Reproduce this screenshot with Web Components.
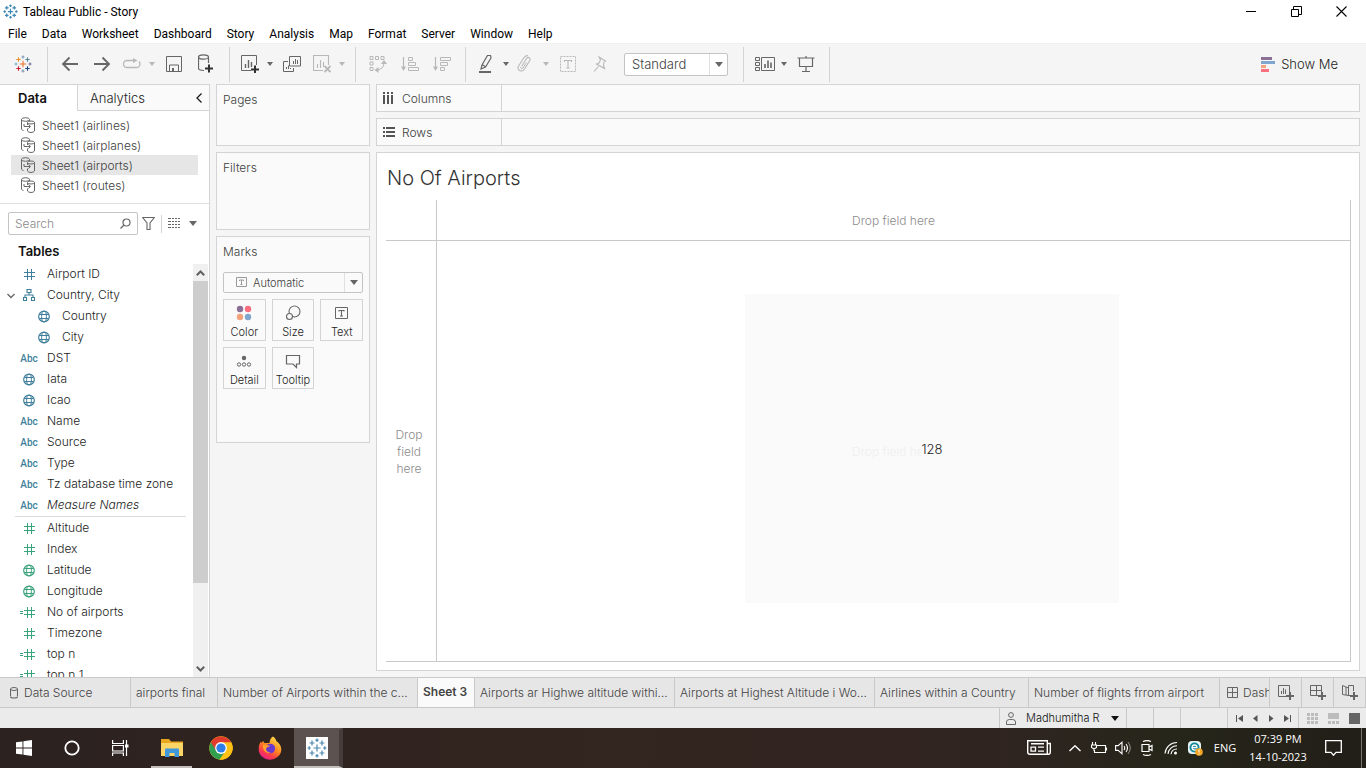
<!DOCTYPE html>
<html lang="en">
<head>
<meta charset="utf-8">
<title>Tableau Public - Story</title>
<style>
  :root {
    --ui: "Inter", "Open Sans", sans-serif;
    --system: "Roboto", "Noto Sans", sans-serif;
    --desktop: "Open Sans", "Noto Sans", sans-serif;
    --line: #d4d4d4;
    --panel: #fafafa;
    --shell: #f5f5f5;
    --ink: #1c1c1c;
    --muted: #404040;
    --dimension: #3f7f9b;
    --measure: #3aa37c;
  }
  body { margin: 0; background: #f5f5f5; color: #1c1c1c; font-family: var(--ui); font-size: 12px; font-weight: 300; }
</style>
</head>
<body>
<story-app></story-app>

<script>
const define = (name, html, setup) => {
  const template = document.createElement('template');
  template.innerHTML = `<style>*{box-sizing:border-box}button,input,select{font:inherit;color:inherit}button{border:0;background:none;padding:0;margin:0}</style>${html}`;
  customElements.define(name, class extends HTMLElement {
    constructor() {
      super();
      this.attachShadow({ mode: 'open' }).append(template.content.cloneNode(true));
    }
    connectedCallback() { if (setup) setup(this, this.shadowRoot); }
  });
};
const iconElement = name => {
  const icon = document.createElement('ui-icon');
  icon.setAttribute('name', name);
  return icon;
};

/* ---------- icon set: [width, height, markup] ---------- */
const plus = (x, y, r, c) => `<path d="M${x - r} ${y}h${2 * r}M${x} ${y - r}v${2 * r}" stroke="${c}" fill="none"/>`;
const sparkle = (w, c, s) => [w, w, `<g transform="scale(${w / 18})" stroke-width="${s}">` +
  plus(9, 9, 3.2, c[0]) + plus(9, 2, 1.5, c[1]) + plus(9, 16, 1.5, c[2]) + plus(2, 9, 1.5, c[3]) + plus(16, 9, 1.5, c[4]) +
  plus(4.5, 4.5, 2.2, c[5]) + plus(13.5, 4.5, 2.2, c[6]) + plus(4.5, 13.5, 2.2, c[7]) + plus(13.5, 13.5, 2.2, c[8]) + '</g>'];
const mono = c => Array(9).fill(c);
const line = (d, w = 1) => `<path d="${d}" fill="none" stroke="currentColor" stroke-width="${w}"/>`;
const fill = d => `<path d="${d}" fill="currentColor"/>`;
const hash = line('M4.500 0v11M8.500 0v11M1 3.500h11M1 7.500h11');

const ICONS = {
  logo: sparkle(18, ['#e8762c', '#7a9ab5', '#7a8fb0', '#7ab0c4', '#6d6a9a', '#eb912c', '#5b879b', '#c72035', '#1f447e'], 1.1),
  logoBlue: sparkle(15, mono('#3f8ab5'), 1.5),
  logoTask: sparkle(20, mono('#4c88ae'), 1.1),
  minimize: [11, 11, line('M0 5.5h10')],
  restore: [11, 11, line('M.5 3.5h7v7h-7zM2.5 3V.5h8v8H8')],
  close: [11, 11, line('M.5.5l10 10M10.5.5l-10 10', 1.1)],
  caret: [6, 4, fill('M0 0h6L3 4z')],
  caretWide: [8, 5, fill('M0 0h8L4 5z')],
  back: [18, 16, line('M17 8H2M8.500 1.500L2 8l6.500 6.500', 1.8)],
  forward: [18, 16, line('M1 8h15M9.500 1.500L16 8l-6.500 6.500', 1.8)],
  redo: [18, 12, line('M12 2.500H4A3.500 3.500 0 0 0 .5 6v0A3.500 3.500 0 0 0 4 9.500h9.500A3.500 3.500 0 0 0 17 6q0-1.500-1-2.500', 1.3) + fill('M10 0l4.500 2.500L10 5z')],
  save: [16, 16, line('M.5.5h15v15H.5zM3.500 15v-6h9v6M6.500 15v-3') + fill('M6 12h2v3H6z')],
  addData: [16, 20, line('M6 16.500C3 16.500.500 16 .5 14.500V3.500M10.500 3.500V9', 1.2) + `<ellipse cx="5.500" cy="3" rx="5" ry="2.200" fill="none" stroke="currentColor" stroke-width="1.200"/>` + `<path d="M7 14.500h8M11 10.500v8" stroke="#333" stroke-width="2"/>`],
  newSheet: [18, 18, line('M10 15.500H.500V.500h15V10') + line('M4.500 13V9M7.500 13V5M10.500 12V7', 1.4) + `<path d="M10 14.500h8M14 10.500v8" stroke="#333" stroke-width="2"/>`],
  duplicate: [18, 16, line('M6.500.500h11v9.500h-11zM5 5.500H.500v10h10V12M10.500 8V5M12.500 8V3M14.500 8V4M3.500 13v-2M5.500 13V9.500M7.500 13v-1')],
  clear: [18, 18, line('M10 15.500H.500V.500h15V10M4.500 13V9M7.500 13V5M10.500 12V7', 1.1) + line('M11.500 11l6 6M17.500 11l-6 6', 1.8)],
  swap: [18, 18, line('M1 1.500h3v3H1zM6.500 1.500h3v3h-3zM12 1.500h3v3h-3zM1 7h3v3H1zM1 12.500h3v3H1zM8 15q6.500-.5 7-7') + fill('M5.500 15l4-3v6zM15 5l3 4h-6z')],
  sortAsc: [18, 16, line('M2.500 1v12', 1.2) + fill('M0 10.500h5L2.500 15z') + line('M7.500 1.500h4v3h-4zM7.500 6.500h7v3h-7zM7.500 11.500h10v3h-10z')],
  sortDesc: [18, 16, line('M2.500 1v12', 1.2) + fill('M0 10.500h5L2.500 15z') + line('M7.500 1.500h10v3h-10zM7.500 6.500h7v3h-7zM7.500 11.500h4v3h-4z')],
  highlight: [18, 18, line('M4 14l1-4 5.500-9.500h3L14 3 8.500 12 4 14zM5 9.500l4 2.500', 1.2) + fill('M2 16h12v2H2z')],
  clip: [16, 18, line('M5 11l4.500-7.500q1.500-1.800 2.800-.8t.5 2.800L7.500 14q-2 3-4.800 1.500T1.600 11L7 2.500Q9 .2 11 .7', 1.1) + line('M9.500 7.500L6 13q-1 1-1.800.4t-.2-1.800', 1)],
  textBox: [18, 16, `<path d="M1.500.500h15v15h-15z" fill="none" stroke="currentColor" stroke-dasharray="2 1"/>` + line('M5.500 6V4.500h7V6M9 4.500v7.500M7.500 12h3', 1.1)],
  pin: [14, 16, line('M6 1l6.500 4-1.500 1-.5 3.500 1 3-8-4.500 2.500-1L7.500 4zM5.500 10.500L1 15.500', 1.1)],
  cards: [20, 16, line('M.5 1.500h4v3h-4zM.5 6.500h4v3h-4zM.5 11.500h4v3h-4zM6.500 1.500h13v13h-13z') + line('M10 12V8M13 12V4.500M16 12V6.500', 1.6)],
  present: [18, 16, line('M.5 2h17M2.500 2v8.500h13V2M9 10.500V15M5 15.500h8M9 0v2', 1.2)],
  showMe: [14, 15, '<path d="M0 0h11v3H0z" fill="#8a6f96"/><path d="M0 4h14v3H0z" fill="#7fa6cd"/><path d="M0 8h5v3H0z" fill="#f2a27c"/><path d="M0 12h8v3H0z" fill="#fa6e7e"/>'],
  collapse: [6, 10, line('M5.500.500L1 5l4.500 4.500', 1.3)],
  expand: [8, 6, line('M.5 1L4 4.500 7.500 1', 1.3)],
  source: [14, 16, line('M2.500 13.500C1 13 .5 12.500.5 12V2.500M8.500 2.500V4') + `<ellipse cx="4.500" cy="2.500" rx="4" ry="1.800" fill="none" stroke="currentColor"/><ellipse cx="10" cy="5.500" rx="3.500" ry="1.500" fill="none" stroke="currentColor"/>` + line('M6.500 6v2M6.500 11.500V14q1 1.500 3.500 1.500t3.500-1.500V5.500M3 7v2.500h6M7.500 7.500l2 2-2 2')],
  search: [11, 11, `<circle cx="6.500" cy="4.500" r="3.500" fill="none" stroke="currentColor" stroke-width="1.200"/>` + line('M4 7L.5 10.500', 1.3)],
  filter: [13, 13, line('M.7.500h11.600L8 6v6.500H5V6z', 1.1)],
  list: [12, 11, `<path d="M0 .5h12M0 3.500h12M0 6.500h12M0 9.500h12" stroke="currentColor" stroke-dasharray="3 1 2 1 2 1 2" fill="none"/>`],
  number: [12, 11, hash],
  calc: [20, 11, `<g transform="translate(4)">${hash}</g>` + line('M1 4.500h3M1 6.500h3')],
  geo: [12, 13, `<g transform="translate(0 .5)"><circle cx="6" cy="6" r="5.300" fill="none" stroke="currentColor" stroke-width="1.200"/><ellipse cx="6" cy="6" rx="2.400" ry="5.300" fill="none" stroke="currentColor"/>` + line('M1.300 4h9.400M1.300 8h9.400') + '</g>'],
  hierarchy: [12, 13, line('M4 .5h4v3H4zM.5 8.500h3v3h-3zM8.500 8.500h3v3h-3zM6 3.500V6M2 8.500V6h8v2.500', 1.1)],
  up: [9, 6, line('M.8 5.200L4.500 1.500 8.200 5.200', 2)],
  down: [9, 6, line('M.8.800L4.500 4.500 8.200.800', 2)],
  columns: [11, 12, fill('M0 0h2v2H0zM0 3h2v9H0zM4 0h2v2H4zM4 3h2v9H4zM8 0h2v2H8zM8 3h2v9H8z')],
  rows: [12, 10, fill('M0 0h2v2H0zM3 0h9v2H3zM0 4h2v2H0zM3 4h9v2H3zM0 8h2v2H0zM3 8h9v2H3z')],
  markText: [11, 11, line('M.5.500h10v9H.5z') + line('M3.500 4V3h4v1M5.500 3v5M4.500 7.500h2')],
  color: [16, 16, '<circle cx="4" cy="4" r="3.200" fill="#8a6f96"/><circle cx="12" cy="4" r="3.200" fill="#fa6e7e"/><circle cx="4" cy="12" r="3.200" fill="#f2a27c"/><circle cx="12" cy="12" r="3.200" fill="#7fa6cd"/>'],
  size: [16, 16, `<circle cx="9.500" cy="6.500" r="5.500" fill="none" stroke="currentColor" stroke-width="1.100"/><circle cx="4.500" cy="11.500" r="3" fill="#fafafa" stroke="currentColor" stroke-width="1.100"/>`],
  text: [16, 16, line('M1.500 2.500h12v11h-12z') + line('M5 6.500V5.500h5v1M7.500 5.500v5.500M6 11h3', 1.1)],
  detail: [16, 16, '<circle cx="8" cy="5" r="2.200" fill="currentColor"/><g fill="none" stroke="currentColor"><circle cx="3" cy="11.500" r="1.700"/><circle cx="8" cy="11.500" r="1.700"/><circle cx="13" cy="11.500" r="1.700"/></g>'],
  tooltip: [16, 16, line('M1.500 2.500h13v8.500h-3v3.500L8 11H1.500z', 1.2)],
  database: [8, 12, line('M.5 2v7M7.500 2v7M.5 9.500q0 1.500 3.500 1.500T7.500 9.500', 1.1) + '<ellipse cx="4" cy="2" rx="3.500" ry="1.500" fill="none" stroke="currentColor"/>'],
  dashboard: [11, 11, line('M.5.500h10v10H.5zM5.500.500v10M.5 5.500h10')],
  addSheet: [16, 16, line('M8 11.500H.500V.500h11V7M3.500 9V6M5.500 9V3M7.500 9V4.500') + line('M8 11h8M12 7v8', 2)],
  addDash: [16, 16, line('M8 10.500H.500V.500h11V7M6.500.500v10M.5 5.500h11') + line('M8 11h8M12 7v8', 2)],
  addStory: [16, 16, line('M8 10.500H6.500L.5 9.500V.5L4 2l2.500 1V.500H9M6.500 2v9M11.500.500V6M4 2V10M9 .500h2.500') + line('M8 11h8M12 7v8', 2)],
  user: [10, 13, '<circle cx="5" cy="3" r="2.400" fill="none" stroke="currentColor"/>' + line('M.5 12.500V10Q.5 7.500 3.500 7.500h3q3 0 3 2.500v2.500z')],
  first: [7, 7, fill('M0 0h1v7H0zM2 3.500L7 0v7z')],
  prev: [5, 7, fill('M0 3.500L4.500 0v7z')],
  next: [5, 7, fill('M4.500 3.500L0 0v7z')],
  last: [7, 7, fill('M6 0h1v7H6zM5 3.500L0 0v7z')],
  gridView: [11, 11, fill('M0 0h3v3H0zM4 0h3v3H4zM8 0h3v3H8zM0 4h3v3H0zM4 4h3v3H4zM8 4h3v3H8zM0 8h3v3H0zM4 8h3v3H4zM8 8h3v3H8z')],
  filmView: [11, 11, fill('M0 0h11v6H0zM0 8h3v3H0zM4 8h3v3H4zM8 8h3v3H8z')],
  fullView: [11, 11, fill('M0 0h11v11H0z')],
  windows: [16, 16, fill('M0 2.300L6.500 1.400V7.600H0zM7.400 1.300L16 0v7.600H7.400zM0 8.400h6.500v6.200L0 13.700zM7.400 8.400H16V16L7.400 14.700z')],
  cortana: [16, 16, '<circle cx="8" cy="8" r="6.700" fill="none" stroke="currentColor" stroke-width="1.800"/>'],
  taskView: [17, 16, line('M.6 0v3.500h10.800V0M.6 5.500h10.800v5.500H.6zM.6 16v-3h10.800v3M14.500 0v16', 1.2) + fill('M13 4.500h3.500v3H13z')],
  explorer: [22, 18, '<path d="M0 0h8l2 2.500h12V17H0z" fill="#e9a820"/><path d="M0 4h22v13H0z" fill="#fbd667"/><path d="M4 10.500q0-1 1-1h12q1 0 1 1V18h-4.500v-4h-5v4H4z" fill="#3f97dc"/>'],
  chrome: [24, 24, '<circle cx="12" cy="12" r="11.700" fill="#fbc116"/><path d="M12 12L1.900 6.200A11.700 11.700 0 0 0 10.600 23.600L17 14.900z" fill="#30a050"/><path d="M12 6.500H22.300A11.700 11.700 0 0 0 1.900 6.200L7.300 15z" fill="#e23b2e"/><path d="M7.200 14.800L12 12l4.800 2.800-3.800 5.200z" fill="#30a050"/><path d="M16.800 14.800L10.600 23.600A11.700 11.700 0 0 0 22.300 6.500H12z" fill="#fbc116"/><circle cx="12" cy="12" r="5.900" fill="#fff"/><circle cx="12" cy="12" r="4.600" fill="#2f7de9"/>'],
  firefox: [24, 24, '<defs><linearGradient id="f" x1=".8" y1="0" x2=".2" y2="1"><stop offset="0" stop-color="#ffe24a"/><stop offset=".45" stop-color="#ff8a1f"/><stop offset=".75" stop-color="#fb3a4b"/><stop offset="1" stop-color="#e3199c"/></linearGradient></defs><path d="M15 .500c2 1.300 3 3 3.300 4.500 3 2 5 5 5 8.500A11.300 10.400 0 0 1 .7 13c0-3 .7-5.500 2.300-7.500L3.400 7l1.800-2 1.300 2h5c0-3 1.500-5.300 3.500-6.500z" fill="url(#f)"/><circle cx="12.300" cy="12.500" r="4.800" fill="#6a3ad0"/><path d="M5 9c3-1 4 .8 7 .6-.5 1.600-3.500 1.400-4 3.400 0 2 2 3.500 5 3.500-4 1.500-8.500-1-8-7.500z" fill="#ffa22b"/>'],
  news: [24, 16, line('M.7.700h19.600v13.600H3Q.7 14.300.7 12zM20.300 3.500h3V12q0 2.300-2 2.300h-3M4 3.700h13', 1.4) + line('M4 7.200h4.500v4H4zM11 7.200h6M11 11.200h6', 1.3)],
  chevron: [12, 7, line('M.5 6L6 .8 11.500 6', 1.4)],
  battery: [17, 12, line('M6 3.500h8.500v7H3.500V8M15.500 5.500v3M1.500 0v3M4.500 0v3M.5 3h5v2.500L3 7 .5 5.500zM3 7v2', 1.1)],
  speaker: [16, 14, line('M.6 4.600h2.600L7 1.200v11.600L3.200 9.400H.6zM9 5q1.500 2 0 4M11 3q3 4 0 8', 1.1) + `<path d="M13 1q4.500 6 0 12" fill="none" stroke="currentColor" opacity=".5"/>`],
  camera: [12, 16, line('M1 4.500h7v7H1zM8 7l3-1.500v5L8 9M2 1.500Q6-.300 10 1.500M2 14.500q4 1.800 8 0', 1.2)],
  wifi: [14, 14, line('M1 12.500A12 12 0 0 1 13 1.500M4 13A9 9 0 0 1 13 4.800M7 13.300A6 6 0 0 1 13 8', 1.1) + '<circle cx="11.500" cy="12" r="1.500" fill="currentColor"/>'],
  shield: [15, 15, '<rect width="13" height="13" rx="4" fill="#e8f5f6"/><circle cx="6.500" cy="6.500" r="5" fill="#138a99"/><path d="M4 6.700h5Q8.700 4 6.500 4T4 6.500q.3 2.700 2.700 2.700 1.200 0 2-.7" fill="none" stroke="#fff" stroke-width="1.300"/><circle cx="11" cy="11" r="3.800" fill="#f5a623"/><path d="M11 8.500v3M11 12.500v1" stroke="#fff"/>'],
  notify: [17, 16, line('M.7.700h15.600v11.600H11l-2.500 2.900L6 12.300H.7z', 1.3)],
};

customElements.define('ui-icon', class extends HTMLElement {
  connectedCallback() {
    if (this.shadowRoot) return;
    const [w, h, body] = ICONS[this.getAttribute('name')];
    this.attachShadow({ mode: 'open' }).innerHTML =
      `<style>:host{display:inline-flex;flex:none}svg{display:block}</style>
       <svg width="${w}" height="${h}" viewBox="0 0 ${w} ${h}" aria-hidden="true">${body}</svg>`;
  }
});

/* ---------- window chrome ---------- */
define('title-bar', `
  <style>
    :host { display: flex; align-items: center; height: 23px; background: #fff; color: #000; font: 12px/22px var(--system); padding: 0 2px 0 3px; }
    span { margin-left: 5px; flex: 1; }
    button { width: 45px; height: 20px; display: flex; align-items: center; justify-content: center; }
  </style>
  <ui-icon name="logoBlue"></ui-icon><span>Tableau Public - Story</span>
  <button aria-label="Minimize"><ui-icon name="minimize"></ui-icon></button>
  <button aria-label="Restore"><ui-icon name="restore"></ui-icon></button>
  <button aria-label="Close"><ui-icon name="close"></ui-icon></button>`);

define('menu-bar', `
  <style>
    :host { display: flex; height: 20px; background: #fff; color: #000; font: 12px/22px var(--system); padding-left: 8px; gap: 15px; }
    button { line-height: 22px; }
  </style>`, (host, root) => {
  for (const label of ['File', 'Data', 'Worksheet', 'Dashboard', 'Story', 'Analysis', 'Map', 'Format', 'Server', 'Window', 'Help']) {
    const b = document.createElement('button');
    b.textContent = label;
    root.append(b);
  }
});

/* ---------- toolbar ---------- */
define('tool-group', `
  <style>
    :host { display: flex; align-items: center; height: 35px; padding: 0 7px 0 6px; border-right: 1px solid var(--line); }
  </style><slot></slot>`);

define('tool-button', `
  <style>
    :host { display: block; color: #666; }
    :host([off]) { color: #b8b8b8; }
    button { width: 32px; height: 28px; display: flex; align-items: center; justify-content: center; color: inherit; }
    :host([menu]) button { width: 40px; justify-content: space-between; padding: 0 3px 0 5px; }
    .caret { display: none; }
    :host([menu]) .caret { display: inline-flex; }
  </style>
  <button><ui-icon class="caret" name="caret"></ui-icon></button>`,
  (host, root) => {
    const button = root.querySelector('button');
    button.prepend(iconElement(host.getAttribute('icon')));
    button.setAttribute('aria-label', host.getAttribute('label'));
    button.setAttribute('aria-disabled', host.hasAttribute('off'));
  });

define('drop-down', `
  <style>
    :host { display: flex; position: relative; background: #fff; border: 1px solid #c4c4c4; border-radius: 2px; color: var(--muted); }
    select { appearance: none; border: 0; background: none; flex: 1; min-width: 0; padding: 0 0 0 var(--indent, 7px); margin: 0; outline: 0; }
    .lead { position: absolute; left: 12px; top: 0; bottom: 0; display: flex; align-items: center; color: #999; }
    .arrow { width: 18px; border-left: 1px solid #e0e0e0; display: flex; align-items: center; justify-content: center; pointer-events: none; color: #666; }
  </style>
  <div class="lead"><slot name="lead"></slot></div>
  <select><option></option></select>
  <div class="arrow"><ui-icon name="caretWide"></ui-icon></div>`, (host, root) => {
  root.querySelector('option').textContent = host.getAttribute('value');
  root.querySelector('select').setAttribute('aria-label', host.getAttribute('label'));
});

define('tool-bar', `
  <style>
    :host { display: flex; align-items: center; height: 41px; background: var(--shell); border-top: 1px solid #f0f0f0; }
    .home { padding: 0 8px 0 7px; }
    drop-down { width: 104px; height: 23px; margin: 0 8px; font-size: 13px; }
    .show { margin-left: auto; margin-right: 28px; display: flex; align-items: center; gap: 6px; font-size: 13px; color: var(--ink); }
  </style>
  <tool-group class="home"><tool-button icon="logo" label="Start page"></tool-button></tool-group>
  <tool-group>
    <tool-button icon="back" label="Undo"></tool-button>
    <tool-button icon="forward" label="Redo"></tool-button>
    <tool-button icon="redo" label="Replay" menu off></tool-button>
    <tool-button icon="save" label="Save"></tool-button>
    <tool-button icon="addData" label="New data source"></tool-button>
  </tool-group>
  <tool-group>
    <tool-button icon="newSheet" label="New worksheet" menu></tool-button>
    <tool-button icon="duplicate" label="Duplicate"></tool-button>
    <tool-button icon="clear" label="Clear sheet" menu off></tool-button>
  </tool-group>
  <tool-group>
    <tool-button icon="swap" label="Swap rows and columns" off></tool-button>
    <tool-button icon="sortAsc" label="Sort ascending" off></tool-button>
    <tool-button icon="sortDesc" label="Sort descending" off></tool-button>
  </tool-group>
  <tool-group>
    <tool-button icon="highlight" label="Highlight" menu></tool-button>
    <tool-button icon="clip" label="Group members" menu off></tool-button>
    <tool-button icon="textBox" label="Show mark labels" off></tool-button>
    <tool-button icon="pin" label="Fix axes" off></tool-button>
    <drop-down value="Standard" label="Fit"></drop-down>
  </tool-group>
  <tool-group>
    <tool-button icon="cards" label="Show or hide cards" menu></tool-button>
    <tool-button icon="present" label="Presentation mode"></tool-button>
  </tool-group>
  <button class="show"><ui-icon name="showMe"></ui-icon>Show Me</button>`);

/* ---------- data pane ---------- */
define('source-item', `
  <style>
    :host { display: flex; align-items: center; height: 20px; margin: 0 11px; padding-left: 10px; gap: 7px; color: var(--muted); }
    :host([selected]) { background: #e6e6e6; }
    ui-icon { color: #666; }
  </style>
  <ui-icon name="source"></ui-icon><span><slot></slot></span>`);

define('field-item', `
  <style>
    :host { display: grid; grid-template-columns: 18px 22px 1fr; align-items: center; height: 21px; flex: none; color: var(--ink); white-space: nowrap; }
    :host([child]) { padding-left: 15px; }
    .kind { display: flex; justify-content: center; color: var(--dimension); }
    :host([measure]) .kind { color: var(--measure); }
    .abc { font: 500 10px/14px var(--system); }
    .label { padding-left: 7px; line-height: 19px; padding-bottom: 2px; }
    :host([italic]) .label { font-style: italic; }
    .toggle { display: flex; justify-content: flex-end; padding-right: 3px; }
    button { color: #666; display: flex; }
  </style>
  <span class="toggle"></span><span class="kind"></span><span class="label"><slot></slot></span>`, (host, root) => {
  const kind = host.getAttribute('kind');
  const cell = root.querySelector('.kind');
  if (kind === 'abc') cell.innerHTML = '<span class="abc">Abc</span>';
  else cell.replaceChildren(iconElement(kind));
  if (host.hasAttribute('open')) root.querySelector('.toggle').innerHTML = '<button aria-label="Collapse"><ui-icon name="expand"></ui-icon></button>';
});

define('scroll-strip', `
  <style>
    :host { display: flex; flex-direction: column; width: 15px; background: #f0f0f0; color: #606060; }
    button { height: 17px; display: flex; align-items: center; justify-content: center; }
    .track { flex: 1; }
    .thumb { height: 80%; max-height: 302px; background: #cdcdcd; }
  </style>
  <button aria-label="Scroll up"><ui-icon name="up"></ui-icon></button>
  <div class="track"><div class="thumb"></div></div>
  <button aria-label="Scroll down"><ui-icon name="down"></ui-icon></button>`);

define('data-pane', `
  <style>
    :host { display: flex; flex-direction: column; min-height: 0; background: #fff; border-right: 1px solid var(--line); border-top: 1px solid var(--line); }
    .tabs { display: flex; height: 26px; font-size: 13px; flex: none; }
    .tabs button { text-align: left; }
    .on { width: 77px; padding-left: 18px; font-weight: 600; color: #111; }
    .off { flex: 1; background: var(--panel); border-left: 1px solid var(--line); border-bottom: 1px solid var(--line); display: flex; align-items: center; justify-content: space-between; padding: 0 7px 0 12px; }
    .sources { padding: 4px 0 8px; border-bottom: 1px solid #e0e0e0; color: var(--muted); }
    .find { display: flex; align-items: center; height: 23px; margin: 8px 12px 0 8px; color: #666; flex: none; }
    .box { display: flex; align-items: center; width: 130px; height: 23px; border: 1px solid #c4c4c4; border-radius: 2px; padding: 0 6px; }
    input { border: 0; outline: 0; padding: 0; flex: 1; min-width: 0; background: none; }
    input::placeholder { color: #8a8a8a; opacity: 1; }
    .find button { display: flex; }
    .funnel { margin: 0 6px 0 4px; }
    .view { border-left: 1px solid var(--line); height: 18px; align-items: center; padding-left: 6px; gap: 9px; }
    h2 { margin: 7px 0 4px 18px; font-size: 13px; line-height: 18px; font-weight: 600; color: #111; flex: none; }
    .body { display: flex; flex: 1; min-height: 0; }
    .fields { flex: 1; min-width: 0; overflow: hidden; display: flex; flex-direction: column; }
    hr { border: 0; border-top: 1px solid #dcdcdc; margin: 0 7px 1px 15px; flex: none; width: auto; }
    scroll-strip { margin-right: 1px; }
  </style>
  <div class="tabs">
    <button class="on">Data</button>
    <button class="off">Analytics <ui-icon name="collapse"></ui-icon></button>
  </div>
  <div class="sources">
    <source-item>Sheet1 (airlines)</source-item>
    <source-item>Sheet1 (airplanes)</source-item>
    <source-item selected>Sheet1 (airports)</source-item>
    <source-item>Sheet1 (routes)</source-item>
  </div>
  <div class="find">
    <label class="box"><input type="text" placeholder="Search" aria-label="Search"><ui-icon name="search"></ui-icon></label>
    <button class="funnel" aria-label="Filter fields"><ui-icon name="filter"></ui-icon></button>
    <button class="view" aria-label="View options"><ui-icon name="list"></ui-icon><ui-icon name="caretWide"></ui-icon></button>
  </div>
  <h2>Tables</h2>
  <div class="body">
    <div class="fields">
      <field-item kind="number">Airport ID</field-item>
      <field-item kind="hierarchy" open>Country, City</field-item>
      <field-item kind="geo" child>Country</field-item>
      <field-item kind="geo" child>City</field-item>
      <field-item kind="abc">DST</field-item>
      <field-item kind="geo">Iata</field-item>
      <field-item kind="geo">Icao</field-item>
      <field-item kind="abc">Name</field-item>
      <field-item kind="abc">Source</field-item>
      <field-item kind="abc">Type</field-item>
      <field-item kind="abc">Tz database time zone</field-item>
      <field-item kind="abc" italic>Measure Names</field-item>
      <hr>
      <field-item kind="number" measure>Altitude</field-item>
      <field-item kind="number" measure>Index</field-item>
      <field-item kind="geo" measure>Latitude</field-item>
      <field-item kind="geo" measure>Longitude</field-item>
      <field-item kind="calc" measure>No of airports</field-item>
      <field-item kind="number" measure>Timezone</field-item>
      <field-item kind="calc" measure>top n</field-item>
      <field-item kind="calc" measure>top n 1</field-item>
    </div>
    <scroll-strip></scroll-strip>
  </div>`);

/* ---------- cards and shelves ---------- */
define('shelf-card', `
  <style>
    :host { display: block; background: var(--panel); border: 1px solid var(--line); padding: 6px; color: var(--muted); }
    h3 { margin: 0; font-size: 12px; line-height: 18px; font-weight: 300; }
  </style>
  <h3><slot name="title"></slot></h3><slot></slot>`);

define('mark-button', `
  <style>
    :host { display: block; }
    button { width: 100%; height: 42px; border: 1px solid var(--line); background: var(--panel); display: flex; flex-direction: column; align-items: center; justify-content: space-between; padding: 5px 0 0; font-size: 11px; line-height: 16px; color: var(--ink); }
    ui-icon { color: #666; }
  </style>
  <button><span><slot></slot></span></button>`, (host, root) => {
  root.querySelector('button').prepend(iconElement(host.getAttribute('icon')));
});

define('card-column', `
  <style>
    :host { display: flex; flex-direction: column; gap: 6px; }
    .pages { height: 62px; } .filters { height: 78px; } .marks { height: 207px; }
    drop-down { height: 21px; margin-top: 11px; font-size: 11px; --indent: 29px; background: var(--panel); }
    .grid { display: grid; grid-template-columns: repeat(3, 1fr); gap: 6px; margin-top: 6px; }
  </style>
  <shelf-card class="pages"><span slot="title">Pages</span></shelf-card>
  <shelf-card class="filters"><span slot="title">Filters</span></shelf-card>
  <shelf-card class="marks"><span slot="title">Marks</span>
    <drop-down value="Automatic" label="Mark type"><ui-icon slot="lead" name="markText"></ui-icon></drop-down>
    <div class="grid">
      <mark-button icon="color">Color</mark-button>
      <mark-button icon="size">Size</mark-button>
      <mark-button icon="text">Text</mark-button>
      <mark-button icon="detail">Detail</mark-button>
      <mark-button icon="tooltip">Tooltip</mark-button>
    </div>
  </shelf-card>`);

define('axis-shelf', `
  <style>
    :host { display: flex; height: 28px; background: var(--panel); border: 1px solid var(--line); color: var(--muted); flex: none; }
    .name { width: 125px; border-right: 1px solid var(--line); display: flex; align-items: center; padding-left: 6px; }
    .icon { width: 19px; display: flex; color: #555; }
  </style>
  <div class="name"><span class="icon"><slot name="icon"></slot></span><slot></slot></div>`);

define('sheet-view', `
  <style>
    :host { display: flex; flex-direction: column; flex: 1; min-height: 0; background: #fff; border: 1px solid var(--line); padding: 10px 8px 8px 9px; }
    h1 { margin: 0 0 7px 1px; font-size: 20px; line-height: 30px; font-weight: 300; color: #333; }
    .view { flex: 1; display: grid; grid-template-columns: 51px 1fr; grid-template-rows: 41px 1fr; border-right: 1px solid #c9c9c9; border-bottom: 1px solid #c9c9c9; color: #8c8c8c; }
    .view > div { display: flex; align-items: center; justify-content: center; text-align: center; }
    .corner, .rows { border-right: 1px solid #c9c9c9; }
    .corner, .cols { border-bottom: 1px solid #c9c9c9; }
    .rows { line-height: 17px; padding: 0 8px 0 4px; }
    .pane { position: relative; }
    .mark { position: absolute; inset: 53px 231px 58px 308px; background: var(--panel); }
    .ghost { position: relative; color: #efefef; }
    .value { position: absolute; inset: 53px 231px 58px 308px; display: flex; align-items: center; justify-content: center; color: #222; font-size: 13px; }
    .value span { background: var(--panel); }
  </style>
  <h1>No Of Airports</h1>
  <div class="view">
    <div class="corner"></div>
    <div class="cols">Drop field here</div>
    <div class="rows">Drop field here</div>
    <div class="pane">
      <div class="mark"></div>
      <div class="ghost">Drop field here</div>
      <div class="value"><span>128</span></div>
    </div>
  </div>`);

/* ---------- sheet tabs and status bar ---------- */
define('sheet-tab', `
  <style>
    :host { display: block; width: var(--w); flex: none; border-right: 1px solid #c9c9c9; overflow: hidden; }
    button { width: 100%; height: 100%; display: flex; align-items: center; gap: 5px; padding-left: 5px; text-align: left; white-space: nowrap; color: #444; }
    :host([active]) { background: var(--panel); }
    :host([active]) button { font-weight: 600; color: #444; padding-bottom: 2px; }
    :host([data]) button { padding-left: 10px; gap: 6px; }
    :host([tool]) button { justify-content: center; padding: 0; color: #666; }
    :host([grow]) { flex: 1 1 0; min-width: 0; }
    :host([grow]) button { padding-left: 7px; }
  </style>
  <button><slot></slot></button>`, (host, root) => {
  host.style.setProperty('--w', host.getAttribute('w') + 'px');
  if (host.hasAttribute('label')) root.querySelector('button').setAttribute('aria-label', host.getAttribute('label'));
});

define('sheet-tabs', `
  <style>
    :host { display: flex; height: 31px; background: #e6e6e6; border-top: 1px solid #c9c9c9; border-bottom: 1px solid #c9c9c9; flex: none; }
    ui-icon { color: #666; }
  </style>
  <sheet-tab w="131" data><ui-icon name="database"></ui-icon>Data Source</sheet-tab>
  <sheet-tab w="87">airports final</sheet-tab>
  <sheet-tab w="200">Number of Airports within the c...</sheet-tab>
  <sheet-tab w="57" active>Sheet 3</sheet-tab>
  <sheet-tab w="200">Airports ar Highwe altitude withi...</sheet-tab>
  <sheet-tab w="200">Airports at Highest Altitude i Wo...</sheet-tab>
  <sheet-tab w="154">Airlines within a Country</sheet-tab>
  <sheet-tab w="191">Number of flights frrom airport</sheet-tab>
  <sheet-tab w="50" grow><ui-icon name="dashboard"></ui-icon>Dashboard 1</sheet-tab>
  <sheet-tab w="32" tool label="New Worksheet"><ui-icon name="addSheet"></ui-icon></sheet-tab>
  <sheet-tab w="32" tool label="New Dashboard"><ui-icon name="addDash"></ui-icon></sheet-tab>
  <sheet-tab w="32" tool label="New Story"><ui-icon name="addStory"></ui-icon></sheet-tab>`);

define('status-bar', `
  <style>
    :host { display: flex; justify-content: flex-end; height: 20px; background: #ebebeb; color: #111; font-size: 11px; flex: none; }
    .cell { border-left: 1px solid #c9c9c9; display: flex; align-items: center; }
    .cell button { display: flex; align-items: center; }
    .user { width: 127px; padding: 0 7px 0 6px; }
    .user button { flex: 1; }
    .user span { flex: 1; padding-left: 10px; text-align: left; }
    .person { color: #666; }
    .gap { width: 27px; } .gap.wide { width: 47px; }
    .nav { width: 71px; justify-content: space-between; padding: 0 7px 0 8px; color: #555; }
    .views { width: 68px; justify-content: space-between; padding: 0 6px 0 8px; color: #bcbcbc; }
    .now { color: #666; }
  </style>
  <div class="cell user"><button><ui-icon class="person" name="user"></ui-icon><span>Madhumitha R</span><ui-icon name="caretWide"></ui-icon></button></div>
  <div class="cell gap"></div><div class="cell gap"></div><div class="cell gap wide"></div>
  <div class="cell nav">
    <button aria-label="First"><ui-icon name="first"></ui-icon></button><button aria-label="Previous"><ui-icon name="prev"></ui-icon></button>
    <button aria-label="Next"><ui-icon name="next"></ui-icon></button><button aria-label="Last"><ui-icon name="last"></ui-icon></button>
  </div>
  <div class="cell views">
    <button aria-label="Sheet sorter"><ui-icon name="gridView"></ui-icon></button><button aria-label="Filmstrip"><ui-icon name="filmView"></ui-icon></button>
    <button class="now" aria-label="Tabs"><ui-icon name="fullView"></ui-icon></button>
  </div>`);

/* ---------- desktop task bar ---------- */
define('task-bar', `
  <style>
    :host { display: flex; height: 40px; background: linear-gradient(90deg, #2c2220, #33251f 45%, #302421 72%, #26261a 86%, #221e18); color: #fff; font: 11px/18px var(--desktop); flex: none; }
    button { display: flex; align-items: center; justify-content: center; }
    .sys { width: 48px; }
    .apps { display: flex; margin-left: 3px; }
    .apps button { width: 49px; border: solid transparent; border-width: 2px 0; }
    .apps .run { width: 41px; margin: 0 4px; border-bottom-color: #c3bfbd; }
    .apps .active { background: #5c5351; border-bottom-color: #c3bfbd; border-right: 4px solid #453d3b; }
    .tile { background: #fff; display: flex; padding: 1px; }
    .tray { margin-left: auto; display: flex; align-items: center; padding-right: 4px; }
    .tray button { height: 40px; width: 24px; }
    .tray .news { width: 40px; margin-right: 4px; }
    .tray .lang { width: 36px; }
    .tray .clock { flex-direction: column; width: 70px; }
    .tray .notes { width: 40px; margin-right: 8px; }
    .edge { border-left: 1px solid #77726c; height: 40px; }
  </style>
  <button class="sys" aria-label="Start"><ui-icon name="windows"></ui-icon></button>
  <button class="sys" aria-label="Cortana"><ui-icon name="cortana"></ui-icon></button>
  <button class="sys" aria-label="Task view"><ui-icon name="taskView"></ui-icon></button>
  <div class="apps">
    <button class="run" aria-label="File Explorer"><ui-icon name="explorer"></ui-icon></button>
    <button aria-label="Chrome"><ui-icon name="chrome"></ui-icon></button>
    <button aria-label="Firefox"><ui-icon name="firefox"></ui-icon></button>
    <button class="active" aria-label="Tableau"><span class="tile"><ui-icon name="logoTask"></ui-icon></span></button>
  </div>
  <div class="tray">
    <button class="news" aria-label="News"><ui-icon name="news"></ui-icon></button>
    <button aria-label="Hidden icons"><ui-icon name="chevron"></ui-icon></button>
    <button aria-label="Battery"><ui-icon name="battery"></ui-icon></button>
    <button aria-label="Volume"><ui-icon name="speaker"></ui-icon></button>
    <button aria-label="Meet now"><ui-icon name="camera"></ui-icon></button>
    <button aria-label="Network"><ui-icon name="wifi"></ui-icon></button>
    <button aria-label="Security"><ui-icon name="shield"></ui-icon></button>
    <button class="lang">ENG</button>
    <button class="clock"><span>07:39 PM</span><span>14-10-2023</span></button>
    <button class="notes" aria-label="Notifications"><ui-icon name="notify"></ui-icon></button>
    <div class="edge"></div>
  </div>`);

define('story-app', `
  <style>
    :host { display: flex; flex-direction: column; height: 100vh; min-height: 600px; }
    title-bar, menu-bar, tool-bar, task-bar { flex: none; }
    main { flex: 1; min-height: 0; display: grid; grid-template-columns: 210px 154px minmax(0, 1fr); grid-template-rows: minmax(0, 1fr); column-gap: 6px; padding-right: 6px; background: var(--shell); }
    .work { display: flex; flex-direction: column; gap: 6px; padding-bottom: 6px; min-height: 0; }
  </style>
  <title-bar></title-bar>
  <menu-bar></menu-bar>
  <tool-bar></tool-bar>
  <main>
    <data-pane></data-pane>
    <card-column></card-column>
    <div class="work">
      <axis-shelf><ui-icon slot="icon" name="columns"></ui-icon>Columns</axis-shelf>
      <axis-shelf><ui-icon slot="icon" name="rows"></ui-icon>Rows</axis-shelf>
      <sheet-view></sheet-view>
    </div>
  </main>
  <sheet-tabs></sheet-tabs>
  <status-bar></status-bar>
  <task-bar></task-bar>`);
</script>
</body>
</html>
